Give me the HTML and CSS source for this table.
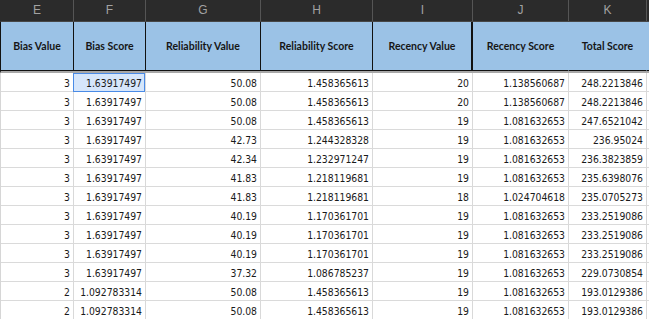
FILE: index.html
```html
<!DOCTYPE html>
<html>
<head>
<meta charset="utf-8">
<link rel="stylesheet" href="styles.css">
</head>
<body>
<div class="sheet">
  <div class="row colbar">
    <div class="c">E</div><div class="c">F</div><div class="c">G</div><div class="c">H</div><div class="c">I</div><div class="c">J</div><div class="c">K</div><div class="c end"></div>
  </div>
  <div class="row hdr">
    <div class="c">Bias Value</div><div class="c">Bias Score</div><div class="c">Reliability Value</div><div class="c">Reliability Score</div><div class="c thick">Recency Value</div><div class="c nob">Recency Score</div><div class="c nob">Total Score</div><div class="c end"></div>
  </div>
  <div class="row data"><div class="c">3</div><div class="c sel">1.63917497</div><div class="c">50.08</div><div class="c">1.458365613</div><div class="c">20</div><div class="c">1.138560687</div><div class="c">248.2213846</div><div class="c end"></div></div>
  <div class="row data"><div class="c">3</div><div class="c">1.63917497</div><div class="c">50.08</div><div class="c">1.458365613</div><div class="c">20</div><div class="c">1.138560687</div><div class="c">248.2213846</div><div class="c end"></div></div>
  <div class="row data"><div class="c">3</div><div class="c">1.63917497</div><div class="c">50.08</div><div class="c">1.458365613</div><div class="c">19</div><div class="c">1.081632653</div><div class="c">247.6521042</div><div class="c end"></div></div>
  <div class="row data"><div class="c">3</div><div class="c">1.63917497</div><div class="c">42.73</div><div class="c">1.244328328</div><div class="c">19</div><div class="c">1.081632653</div><div class="c">236.95024</div><div class="c end"></div></div>
  <div class="row data"><div class="c">3</div><div class="c">1.63917497</div><div class="c">42.34</div><div class="c">1.232971247</div><div class="c">19</div><div class="c">1.081632653</div><div class="c">236.3823859</div><div class="c end"></div></div>
  <div class="row data"><div class="c">3</div><div class="c">1.63917497</div><div class="c">41.83</div><div class="c">1.218119681</div><div class="c">19</div><div class="c">1.081632653</div><div class="c">235.6398076</div><div class="c end"></div></div>
  <div class="row data"><div class="c">3</div><div class="c">1.63917497</div><div class="c">41.83</div><div class="c">1.218119681</div><div class="c">18</div><div class="c">1.024704618</div><div class="c">235.0705273</div><div class="c end"></div></div>
  <div class="row data"><div class="c">3</div><div class="c">1.63917497</div><div class="c">40.19</div><div class="c">1.170361701</div><div class="c">19</div><div class="c">1.081632653</div><div class="c">233.2519086</div><div class="c end"></div></div>
  <div class="row data"><div class="c">3</div><div class="c">1.63917497</div><div class="c">40.19</div><div class="c">1.170361701</div><div class="c">19</div><div class="c">1.081632653</div><div class="c">233.2519086</div><div class="c end"></div></div>
  <div class="row data"><div class="c">3</div><div class="c">1.63917497</div><div class="c">40.19</div><div class="c">1.170361701</div><div class="c">19</div><div class="c">1.081632653</div><div class="c">233.2519086</div><div class="c end"></div></div>
  <div class="row data"><div class="c">3</div><div class="c">1.63917497</div><div class="c">37.32</div><div class="c">1.086785237</div><div class="c">19</div><div class="c">1.081632653</div><div class="c">229.0730854</div><div class="c end"></div></div>
  <div class="row data"><div class="c">2</div><div class="c">1.092783314</div><div class="c">50.08</div><div class="c">1.458365613</div><div class="c">19</div><div class="c">1.081632653</div><div class="c">193.0129386</div><div class="c end"></div></div>
  <div class="row data"><div class="c">2</div><div class="c">1.092783314</div><div class="c">50.08</div><div class="c">1.458365613</div><div class="c">19</div><div class="c">1.081632653</div><div class="c">193.0129386</div><div class="c end"></div></div>
</div>
</body>
</html>
```

FILE: styles.css
```css
* { box-sizing: border-box; }
html, body { margin: 0; padding: 0; background: #ffffff; overflow: hidden; }
.sheet { width: 649px; height: 319px; overflow: hidden; }
.row {
  display: grid;
  grid-template-columns: 73px 72px 115px 112px 100px 96px 78px 1fr;
}
.c { display: flex; align-items: center; min-width: 0; white-space: nowrap; overflow: visible; }

.colbar { height: 22px; background: #2b2b2b; border-left: 1px solid #2b2b2b; border-bottom: 1px solid #474747; }
.colbar .c {
  justify-content: center;
  border-right: 1px solid #555555;
  color: #a2a2a2;
  font-family: "Liberation Sans", Arial, sans-serif;
  font-size: 12px;
  padding-bottom: 1px;
}
.colbar .end { border-right: none; }

.hdr { height: 51px; background: #9bc2e6; border-left: 1px solid #111111; border-bottom: 2px solid #a8a8a8; }
.hdr .c {
  justify-content: center;
  border-right: 1px solid #111111;
  border-bottom: 1px solid #111111;
  font-family: Lato, "Liberation Sans", sans-serif;
  font-weight: 700;
  font-size: 10.5px;
  color: #161616;
}
.hdr .thick { border-right: 2px solid #111111; }
.hdr .nob { border-right: 1px solid #9bc2e6; }
.hdr .end { border-right: none; }

.data { height: 19px; border-left: 1px solid #d6d6d6; }
.data .c {
  justify-content: flex-end;
  padding-right: 3px;
  border-right: 1px solid #d9d9d9;
  border-bottom: 1px solid #dadada;
  font-family: "DejaVu Sans Condensed", "DejaVu Sans", sans-serif;
  font-stretch: condensed;
  font-size: 10.3px;
  color: #1a1a1a;
  padding-top: 1px;
}
.data .end { border-right: none; }
.data .sel { position: relative; background: #d6e6fb; }
.data .sel::after {
  content: "";
  position: absolute;
  left: -1px; top: 0; right: 0; bottom: -1px;
  border: 1px solid #4a8be6;
}
```
